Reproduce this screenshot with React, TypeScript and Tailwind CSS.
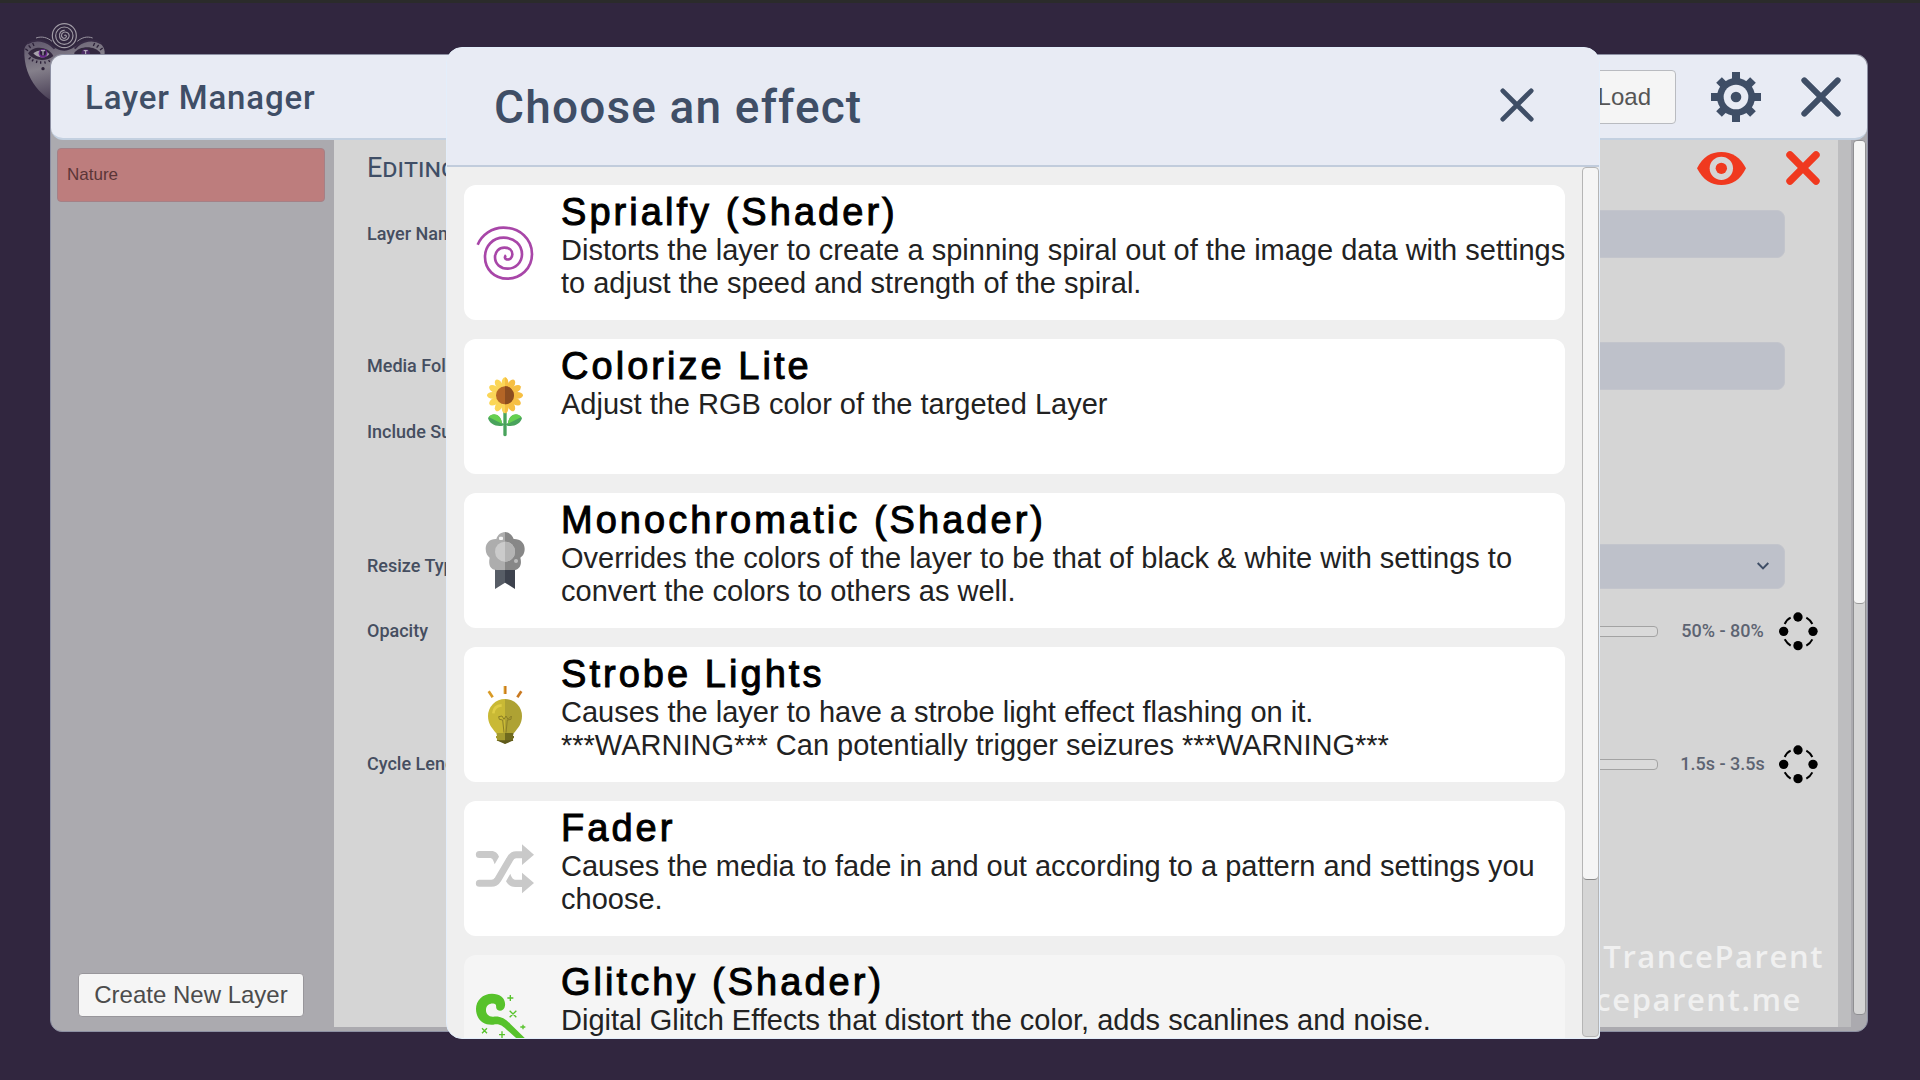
import type { ReactNode } from "react";

function FaceLogo() {
  return (
    <svg viewBox="66 66 255 255" className="h-full w-full" fill="none">
      <defs>
        <linearGradient id="skin" x1="0" y1="0" x2="0.3" y2="1">
          <stop offset="0" stopColor="#5d546a" />
          <stop offset="0.45" stopColor="#85808b" />
          <stop offset="1" stopColor="#3e334c" />
        </linearGradient>
      </defs>
      <path
        d="M73 150C75 120 120 114 150 132C168 146 176 152 193 152C210 152 222 142 240 130C272 112 312 125 314 155C314 215 270 285 193 318C130 300 70 240 73 150Z"
        fill="url(#skin)"
      />
      <path d="M84 160C98 136 145 136 160 168C140 186 100 184 84 160Z" fill="#33283f" />
      <path d="M222 160C238 136 285 136 302 160C282 186 242 184 222 160Z" fill="#33283f" />
      <path d="M100 160C112 148 136 148 148 162C138 176 112 176 100 160Z" fill="#a6a1ab" />
      <circle cx="129" cy="160" r="13" fill="#6b2a8c" />
      <circle cx="129" cy="158" r="9" fill="#291d38" />
      <circle cx="257" cy="160" r="13" fill="#4b2a63" />
      <path d="M123 152h12M129 152v14M251 152h12M257 152v14" stroke="#c5c0ca" strokeWidth="3" />
      <path
        d="M84 152l-8-6M92 144l-6-8M102 138l-4-9M92 172l-6 6M100 178l-4 6M111 182l-2 7M122 184v7M134 184l2 7M146 180l3 6M300 150l8-6M290 143l6-8M280 138l4-9"
        stroke="#2c2138"
        strokeWidth="4"
      />
      <circle cx="129" cy="206" r="5" fill="#2c2138" />
      <path d="M82 130C105 116 140 118 164 146M304 130C282 116 246 118 224 146" stroke="#372b45" strokeWidth="6" />
      <path d="M108 114C125 108 142 112 156 124M278 114C262 108 246 112 232 124" stroke="#9994a0" strokeWidth="3" />
      <circle cx="193" cy="107" r="36" fill="#31263f" stroke="#a09ba5" strokeWidth="3.5" />
      <circle cx="193" cy="107" r="26" stroke="#a09ba5" strokeWidth="3.5" />
      <path
        d="M193 107c4-5 9 2 4 6c-8 6-16-4-11-12c8-10 24-3 21 9c-4 14-24 15-28 1c-3-11 5-21 15-20"
        stroke="#a09ba5"
        strokeWidth="3.5"
      />
    </svg>
  );
}

function SpiralIcon() {
  return (
    <svg viewBox="42 67 180 180" className="h-full w-full" fill="none">
      <path
        d="M53 132C66 102 96 81 130 81C180 81 216 115 216 160C216 204 182 234 142 234C103 234 75 206 75 169C75 136 98 111 131 111C164 111 186 133 186 161C186 186 166 204 143 204C121 204 105 190 105 170C105 153 117 141 133 141C148 141 157 150 157 161C157 172 149 178 140 176C134 175 133 168 138 164"
        stroke="#a846a8"
        strokeWidth="8"
      />
    </svg>
  );
}

const petalAngles = [0, 30, 60, 90, 120, 150, 180, 210, 240, 270, 300, 330];

function FlowerIcon() {
  return (
    <svg viewBox="42 110 180 180" className="h-full w-full">
      <path d="M130 205h10v80q-5 6-10 0z" fill="#49a35c" />
      <path d="M84 233C95 216 122 218 126 248L134 252L128 256C108 260 88 250 84 233Z" fill="#49a35c" />
      <path d="M186 233C175 216 148 218 144 248L136 252L142 256C162 260 182 250 186 233Z" fill="#49a35c" />
      <path d="M86 230C98 214 124 222 126 250Z" fill="#66d150" />
      <path d="M184 230C172 214 146 222 144 250Z" fill="#66d150" />
      {petalAngles.map((a) => (
        <ellipse
          key={a}
          cx="135"
          cy="128"
          rx="10"
          ry="17"
          transform={`rotate(${a} 135 165)`}
          fill={a > 0 && a < 180 ? "#f6bf43" : "#fbd657"}
        />
      ))}
      <path d="M135 111c6 2 10 10 10 17v74c0 8-4 15-10 17z" fill="#f6bf43" />
      <circle cx="135" cy="165" r="27" fill="#b46526" />
      <path d="M135 138a27 27 0 0 1 0 54z" fill="#8c4d20" />
    </svg>
  );
}

function MedalIcon() {
  return (
    <svg viewBox="42 573 180 180" className="h-full w-full">
      <path d="M105 680h30v48l-30 19z" fill="#575d66" />
      <path d="M135 680h30v67l-30-19z" fill="#3d424d" />
      <path
        d="M135 576C122 577 113 585 109 597C90 596 77 609 77 626C77 640 83 648 89 653C84 675 92 690 110 690H135Z"
        fill="#adadad"
      />
      <path
        d="M135 576C148 577 157 585 161 597C180 596 194 609 194 626C194 640 188 648 181 653C187 675 178 690 161 690H135Z"
        fill="#878787"
      />
      <circle cx="135" cy="635" r="30" fill="#cbcbcb" />
      <path d="M135 605a30 30 0 0 1 0 60z" fill="#b4b4b4" />
      <rect x="117" y="590" width="12" height="10" rx="3" fill="#f5f5f5" />
      <circle cx="168" cy="663" r="6" fill="#bdbdbd" />
    </svg>
  );
}

function BulbIcon() {
  return (
    <svg viewBox="42 75 180 180" className="h-full w-full" fill="none">
      <path d="M86 94l12 18M135 78v24" stroke="#d99a25" strokeWidth="8" />
      <path d="M184 94l-12 18" stroke="#c9781f" strokeWidth="8" />
      <path d="M137 78v24" stroke="#c9781f" strokeWidth="4" />
      <path d="M135 117A51 51 0 0 0 84 168C84 192 96 204 108 219H135Z" fill="#c9b935" />
      <path d="M135 117A51 51 0 0 1 186 168C186 192 174 204 162 219H135Z" fill="#aea233" />
      <path d="M100 160C101 145 110 137 125 136" stroke="#dfcd45" strokeWidth="8" />
      <path
        d="M132 218L128 180L118 178L116 170L126 168L132 178L138 168L144 178L154 168L153 178L142 180L138 218"
        stroke="#8c7f26"
        strokeWidth="3"
      />
      <path d="M109 219h26v32l-12-8h-12v-8h-3v-7h3z" fill="#a59b2e" />
      <path d="M161 219h-26v32l12-8h12v-8h3v-7h-3z" fill="#6f6a1e" />
      <path d="M109 241h52l-26 11z" fill="#5f5a1b" />
    </svg>
  );
}

function ShuffleIcon() {
  return (
    <svg viewBox="42 537 180 180" className="h-full w-full" fill="none">
      <path d="M58 670h36c10 0 15-4 20-12l34-58c5-10 10-16 20-16h20" stroke="#c9c9c9" strokeWidth="21" strokeLinecap="round" />
      <path
        d="M58 573h36c12 0 19 7 23 17L104 613C100 600 97 594 90 594H58A10 10 0 0 1 58 573Z"
        fill="#c9c9c9"
      />
      <path d="M151 641C155 654 160 659 168 659H186V681H166C152 681 144 674 138 664Z" fill="#c9c9c9" />
      <path d="M186 553l36 31l-36 31zM186 638l36 31l-36 31z" fill="#c9c9c9" />
    </svg>
  );
}

function WandIcon() {
  return (
    <svg viewBox="102 190 180 180" className="h-full w-full" fill="none">
      <path
        d="M195 228C198 206 180 192 156 192C128 192 108 212 108 238C108 268 130 288 160 285C180 281 188 290 200 300L270 362L280 350L212 284C196 266 180 258 160 261C146 262 137 252 138 239C139 225 152 219 163 222C172 225 166 232 170 238C176 247 193 244 195 228Z"
        fill="#57c22b"
      />
      <path
        d="M211 196v18M202 205h18M209 243l20 20M229 243l-20 20M126 296l15 15M141 296l-15 15M186 305v20M177 315h18M249 285v14M241 292h15"
        stroke="#57c22b"
        strokeWidth="4"
      />
    </svg>
  );
}

function GearIcon() {
  return (
    <svg viewBox="0 0 150 150" className="size-[50px]">
      <g fill="#3f4e66">
        {[0, 45, 90, 135].map((a) => (
          <rect key={a} x="63" y={a % 90 ? 3 : 0} width="24" height={a % 90 ? 144 : 150} transform={`rotate(${a} 75 75)`} />
        ))}
        <circle cx="75" cy="75" r="57" />
      </g>
      <circle cx="75" cy="75" r="37" fill="#e8ebf4" />
      <circle cx="75" cy="75" r="16" fill="#3f4e66" />
    </svg>
  );
}

function Cross({ width }: { width: number }) {
  return (
    <svg viewBox="0 0 120 120" className="h-full w-full" stroke="currentColor" strokeWidth={width} strokeLinecap="round">
      <path d={width > 20 ? "M14 14L106 106M106 14L14 106" : "M10 10L110 110M110 10L10 110"} />
    </svg>
  );
}

function EyeIcon() {
  return (
    <svg viewBox="0 0 147 99" className="h-[33px] w-[49px]">
      <path d="M0 49C18 14 42 0 73 0C105 0 130 15 147 49C130 84 105 99 73 99C42 99 18 84 0 49Z" fill="#f0391f" />
      <circle cx="73" cy="49" r="35" fill="#d5d5d5" />
      <circle cx="73" cy="49" r="17" fill="#f0391f" />
    </svg>
  );
}

function CycleIcon() {
  return (
    <svg viewBox="0 0 117 117" className="h-[39px] w-[39px]" fill="none">
      <path
        d="M17 36Q24 22 35 17M82 17Q94 24 100 36M100 82Q94 94 82 101M35 101Q24 94 17 82"
        stroke="#000"
        strokeWidth="6"
      />
      <circle cx="57" cy="15" r="14" fill="#000" />
      <circle cx="57" cy="101" r="14" fill="#000" />
      <circle cx="14" cy="58" r="14" fill="#000" />
      <circle cx="102" cy="58" r="14" fill="#000" />
    </svg>
  );
}

const effects: { title: string; text: string; icon: ReactNode }[] = [
  {
    title: "Sprialfy (Shader)",
    text: "Distorts the layer to create a spinning spiral out of the image data with settings to adjust the speed and strength of the spiral.",
    icon: <SpiralIcon />,
  },
  { title: "Colorize Lite", text: "Adjust the RGB color of the targeted Layer", icon: <FlowerIcon /> },
  {
    title: "Monochromatic (Shader)",
    text: "Overrides the colors of the layer to be that of black & white with settings to convert the colors to others as well.",
    icon: <MedalIcon />,
  },
  {
    title: "Strobe Lights",
    text: "Causes the layer to have a strobe light effect flashing on it.\n***WARNING*** Can potentially trigger seizures ***WARNING***",
    icon: <BulbIcon />,
  },
  {
    title: "Fader",
    text: "Causes the media to fade in and out according to a pattern and settings you choose.",
    icon: <ShuffleIcon />,
  },
  {
    title: "Glitchy (Shader)",
    text: "Digital Glitch Effects that distort the color, adds scanlines and noise.",
    icon: <WandIcon />,
  },
];

function Row({ label, id, gap, children }: { label: string; id: string; gap: string; children: ReactNode }) {
  return (
    <div className={`flex h-12 items-center ${gap}`}>
      <label htmlFor={id} className="w-[280px] shrink-0 font-['Roboto',sans-serif] text-lg font-medium text-[#454e60]">
        {label}
      </label>
      {children}
    </div>
  );
}

function RangeField({ id, value }: { id: string; value: string }) {
  return (
    <>
      <input
        id={id}
        type="range"
        className="h-[11px] min-w-0 flex-1 appearance-none rounded-sm border border-[#a3a3a3] bg-[#dadada] [&::-webkit-slider-thumb]:w-0 [&::-webkit-slider-thumb]:appearance-none"
      />
      <output
        htmlFor={id}
        className="w-[121px] shrink-0 pl-2 text-center font-['Roboto',sans-serif] text-lg font-medium text-[#5d6472]"
      >
        {value}
      </output>
      <button aria-label="Cycle settings" className="mr-0.5 shrink-0">
        <CycleIcon />
      </button>
    </>
  );
}

const fieldClass = "mr-[35px] h-12 min-w-0 flex-1 rounded-lg border border-[#c3c5cc] bg-[#bec1ca]";

function LayerManager() {
  return (
    <section className="flex min-w-0 flex-1 flex-col overflow-hidden rounded-xl border border-[#8d90a3] bg-[#abaaaf]">
      <header className="flex h-[85px] shrink-0 items-center rounded-xl border-b-2 border-[#c3d0e0] bg-[#e8ebf4] pr-[26px] pl-[34px]">
        <h1 className="flex-1 pt-0.5 font-['Roboto',sans-serif] text-[33px] font-medium tracking-wide text-[#3f4e66]">
          Layer Manager
        </h1>
        <button className="h-[54px] rounded-sm border border-[#b9bbc0] bg-[#f5f5f5] px-6 font-['Liberation_Sans',sans-serif] text-2xl text-[#555]">
          Load
        </button>
        <button aria-label="Settings" className="ml-[35px]">
          <GearIcon />
        </button>
        <button aria-label="Close layer manager" className="ml-10 size-10 text-[#3f4e66]">
          <Cross width={18} />
        </button>
      </header>
      <div className="flex min-h-0 flex-1 pr-px">
        <aside className="flex w-[283px] shrink-0 flex-col justify-between pt-2 pr-[9px] pb-3.5 pl-1.5">
          <button className="h-[54px] rounded-sm border border-[#a58086] bg-[#bd7d7d] pl-[9px] text-left font-['Liberation_Sans',sans-serif] text-[17px] text-[#5b3537]">
            Nature
          </button>
          <button className="h-11 self-center rounded-sm border border-[#98969b] bg-[#f5f5f5] px-[15px] font-['Liberation_Sans',sans-serif] text-2xl text-[#4c4c4c]">
            Create New Layer
          </button>
        </aside>
        <div className="relative mb-1 flex min-w-0 flex-1 flex-col bg-[#d5d5d5] pt-1.5 pr-[18px] pl-[33px]">
          <div className="flex h-11 items-center">
            <h2 className="flex-1 font-['Roboto',sans-serif] text-[27px] text-[#3f4e66] [font-variant:small-caps]">Editing</h2>
            <button aria-label="Toggle visibility">
              <EyeIcon />
            </button>
            <button aria-label="Delete layer" className="ml-10 size-[34px] text-[#f0391f]">
              <Cross width={26} />
            </button>
          </div>
          <Row label="Layer Name" id="layer-name" gap="mt-5">
            <input id="layer-name" className={fieldClass} />
          </Row>
          <Row label="Media Folder" id="media-folder" gap="mt-[84px]">
            <input id="media-folder" className={fieldClass} />
          </Row>
          <Row label="Include Subfolders" id="subfolders" gap="mt-[18px]">
            <input id="subfolders" type="checkbox" className="size-6" />
          </Row>
          <Row label="Resize Type" id="resize" gap="mt-[86px]">
            <span className="relative mr-[35px] flex min-w-0 flex-1">
              <select id="resize" className="h-[45px] w-full appearance-none rounded-lg border border-[#c3c5cc] bg-[#bec1ca]" />
              <svg viewBox="0 0 36 24" className="pointer-events-none absolute top-[18px] right-4 h-2 w-3" fill="none">
                <path d="M2 3L18 19L34 3" stroke="#3f4e66" strokeWidth="6" />
              </svg>
            </span>
          </Row>
          <Row label="Opacity" id="opacity" gap="mt-[17px]">
            <RangeField id="opacity" value="50% - 80%" />
          </Row>
          <Row label="Cycle Length" id="cycle" gap="mt-[85px]">
            <RangeField id="cycle" value="1.5s - 3.5s" />
          </Row>
          <div className="absolute right-3.5 bottom-1.5 text-right font-['Open_Sans',sans-serif] text-[31px] leading-[43px] font-semibold tracking-wider text-[#f0f0f0]">
            <p>TranceParent</p>
            <p className="pr-[22px]">tranceparent.me</p>
          </div>
        </div>
        <div className="mb-1 w-[13px] shrink-0 bg-[#bdbdbf]" />
        <div className="mb-4 ml-0.5 w-[13px] shrink-0 rounded-sm border border-[#8f8f92] bg-[#d5d5d5]">
          <div className="h-[53%] rounded-sm border-b border-[#999] bg-[#f5f5f5]" />
        </div>
      </div>
    </section>
  );
}

function EffectDialog() {
  return (
    <section
      role="dialog"
      aria-label="Choose an effect"
      className="flex min-w-0 flex-1 flex-col overflow-hidden rounded-2xl rounded-br-sm border border-[#e3eefb] bg-[#efefef]"
    >
      <header className="flex h-[119px] shrink-0 items-center justify-between border-b-2 border-[#c1ccdc] bg-[#e8ebf4] pr-[65px] pl-[47px]">
        <h2 className="pt-0.5 font-['Roboto',sans-serif] text-[46px] font-medium tracking-wide text-[#3f4e66]">
          Choose an effect
        </h2>
        <button aria-label="Close" className="mb-1 size-[34px] text-[#3f4e66]">
          <Cross width={17} />
        </button>
      </header>
      <div className="flex min-h-0 flex-1">
        <ul className="flex min-w-0 flex-1 flex-col gap-[19px] overflow-hidden pt-[18px] pr-[17px] pl-[17px]">
          {effects.map((e, i) => (
            <li key={e.title} className="shrink-0">
              <button
                className={`flex h-[135px] w-full rounded-xl pl-2.5 text-left font-['Liberation_Sans',sans-serif] text-black ${
                  i === 5 ? "bg-[#f5f5f5]" : "bg-white"
                }`}
              >
                <span className="mr-[27px] size-[60px] shrink-0 self-center">{e.icon}</span>
                <span className="-mr-2 flex min-w-0 flex-1 flex-col self-start pt-[7px]">
                  <span className="mb-px text-[38px] leading-[41px] tracking-[0.08em] [-webkit-text-stroke:1px_black]">
                    {e.title}
                  </span>
                  <span className="text-[29px] leading-[33px] whitespace-pre-line text-[#222]">{e.text}</span>
                </span>
              </button>
            </li>
          ))}
        </ul>
        <div className="mb-px w-[17px] shrink-0 rounded-sm border border-[#b5b5b5] bg-[#d5d5d5]">
          <div className="h-[82%] rounded-sm border-b border-[#888] bg-[#f5f5f5]" />
        </div>
      </div>
    </section>
  );
}

export default function App() {
  return (
    <div className="relative flex min-h-screen overflow-hidden border-t-[3px] border-[#2b2b2b] bg-[#31263f] pt-[51px] pr-[52px] pb-12 pl-[50px]">
      <div className="absolute top-[19px] left-[22px] size-[85px]">
        <FaceLogo />
      </div>
      <div className="relative flex min-w-0 flex-1">
        <LayerManager />
      </div>
      <div className="absolute inset-0 flex pt-11 pr-80 pb-[41px] pl-[446px]">
        <EffectDialog />
      </div>
    </div>
  );
}
